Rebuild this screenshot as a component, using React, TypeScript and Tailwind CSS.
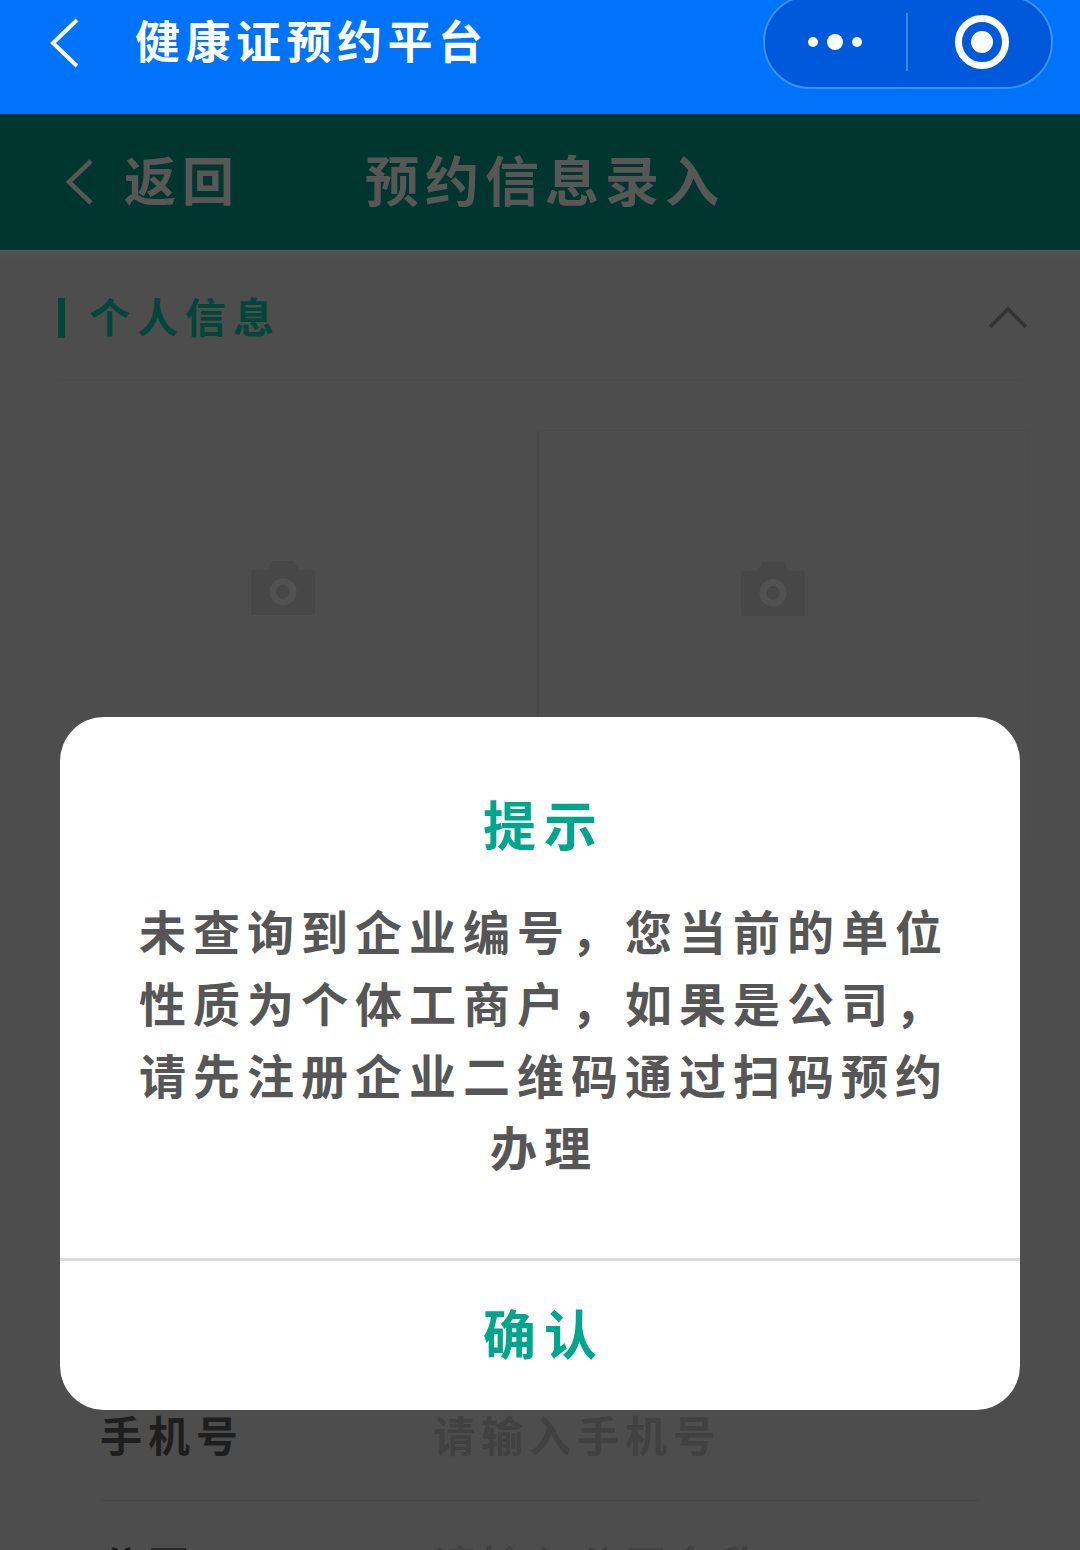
const font = "font-['Liberation_Serif','Noto_Sans_CJK_SC',serif]";

function Camera() {
  return (
    <svg width="66" height="58" viewBox="0 0 66 60" className="block">
      <path d="M0 14a3 3 0 0 1 3-3h14l5-9h22l5 9h14a3 3 0 0 1 3 3v41a3 3 0 0 1-3 3H3a3 3 0 0 1-3-3z" fill="#474747" />
      <circle cx="33" cy="34" r="14" fill="#525252" />
      <circle cx="33" cy="34" r="7" fill="#474747" />
    </svg>
  );
}

function UploadBox({ extra }: { extra: string }) {
  return (
    <div className={`flex h-[410px] w-[490px] items-start justify-center pt-[129px] pr-[20px] ${extra}`}>
      <Camera />
    </div>
  );
}

export default function App() {
  return (
    <div className={`relative h-[1550px] w-[1080px] overflow-hidden bg-[#4d4d4d] ${font}`}>
      <header className="relative flex h-[114px] items-center bg-[#0073fb] pb-[29px] pl-[50px]">
        <svg width="30" height="50" viewBox="0 0 30 50" fill="none" stroke="#ffffff" strokeWidth="4">
          <path d="M27 2 3 25l24 23" />
        </svg>
        <h1 className="ml-[55px] translate-y-[2px] text-[45px] leading-none font-bold tracking-[5.5px] whitespace-nowrap text-white">健康证预约平台</h1>
        <div className="absolute top-[-5px] right-[27px] flex h-[94px] w-[290px] items-center rounded-[47px] border-2 border-[#3d8ff0] bg-[#0059da]">
          <div className="flex h-[58px] w-[143px] items-center justify-center gap-[9px] border-r-2 border-[#3a86e6] pr-[2px]">
            <span className="size-[10px] rounded-full bg-white" />
            <span className="size-[16px] rounded-full bg-white" />
            <span className="size-[10px] rounded-full bg-white" />
          </div>
          <div className="flex flex-1 items-center justify-center pl-[4px]">
            <div className="flex size-[54px] items-center justify-center rounded-full border-[7px] border-white">
              <span className="size-[22px] rounded-full bg-white" />
            </div>
          </div>
        </div>
      </header>

      <div className="flex h-[136px] items-center border-b border-[#0f3b32] bg-[#00362e] pl-[65px] text-[#575757]">
        <svg width="28" height="46" viewBox="0 0 28 46" fill="none" stroke="#575757" strokeWidth="4.5">
          <path d="M26 2 4 23l22 21" />
        </svg>
        <span className="ml-[31px] translate-y-[2px] text-[52px] leading-none font-bold tracking-[6px] whitespace-nowrap">返回</span>
        <span className="ml-[125px] translate-y-[2px] text-[54px] leading-none font-bold tracking-[6px] whitespace-nowrap">预约信息录入</span>
      </div>

      <main className="bg-[linear-gradient(#4f5652_0,#4d4d4d_8px)]">
        <div className="mx-[58px] flex h-[130px] items-center justify-between border-b border-[#4a4a4a] pt-[6px]">
          <div className="flex items-center">
            <span className="h-[40px] w-[7px] bg-[#00473a]" />
            <span className="ml-[24px] translate-y-[2px] text-[41px] leading-none font-bold tracking-[7px] whitespace-nowrap text-[#00473a]">个人信息</span>
          </div>
          <svg width="40" height="24" viewBox="0 0 40 24" fill="none" stroke="#333333" strokeWidth="3.5" className="mr-[-6px]">
            <path d="M2 21 20 3l18 18" />
          </svg>
        </div>

        <div className="mt-[50px] ml-[48px] flex">
          <UploadBox extra="border-r border-[#484848]" />
          <UploadBox extra="border-x border-t border-[#4a4a4a]" />
        </div>
      </main>

      <div className="absolute top-[1405px] right-[100px] left-[100px] flex h-[96px] items-start border-b border-[#484848] text-[42px] leading-none font-bold tracking-[6px] whitespace-nowrap">
        <span className="mt-[12px] w-[333px] text-[#1e1e1e]">手机号</span>
        <span className="mt-[12px] text-[#414141]">请输入手机号</span>
      </div>
      <div className="absolute top-[1547px] right-[100px] left-[100px] flex text-[42px] leading-none font-bold tracking-[6px] whitespace-nowrap">
        <span className="w-[333px] text-[#1e1e1e]">公司</span>
        <span className="text-[#414141]">请输入公司名称</span>
      </div>

      <div className="absolute top-[717px] left-[60px] flex h-[693px] w-[960px] flex-col rounded-[44px] bg-white">
        <h2 className="mt-[85px] pl-[8px] text-center text-[53px] leading-none font-bold tracking-[8px] text-[#00a58d]">提示</h2>
        <p className="mt-[43px] mr-[66px] ml-[74px] text-center text-[47px] leading-[72px] font-bold tracking-[7px] text-[#565656]">
          未查询到企业编号，您当前的单位性质为个体工商户，如果是公司，请先注册企业二维码通过扫码预约办理
        </p>
        <div className="mt-auto flex h-[152px] items-center justify-center border-t-[3px] border-[#dcdcdc] pl-[8px]">
          <span className="translate-y-[2px] text-[53px] leading-none font-bold tracking-[8px] text-[#00a58d]">确认</span>
        </div>
      </div>
    </div>
  );
}
